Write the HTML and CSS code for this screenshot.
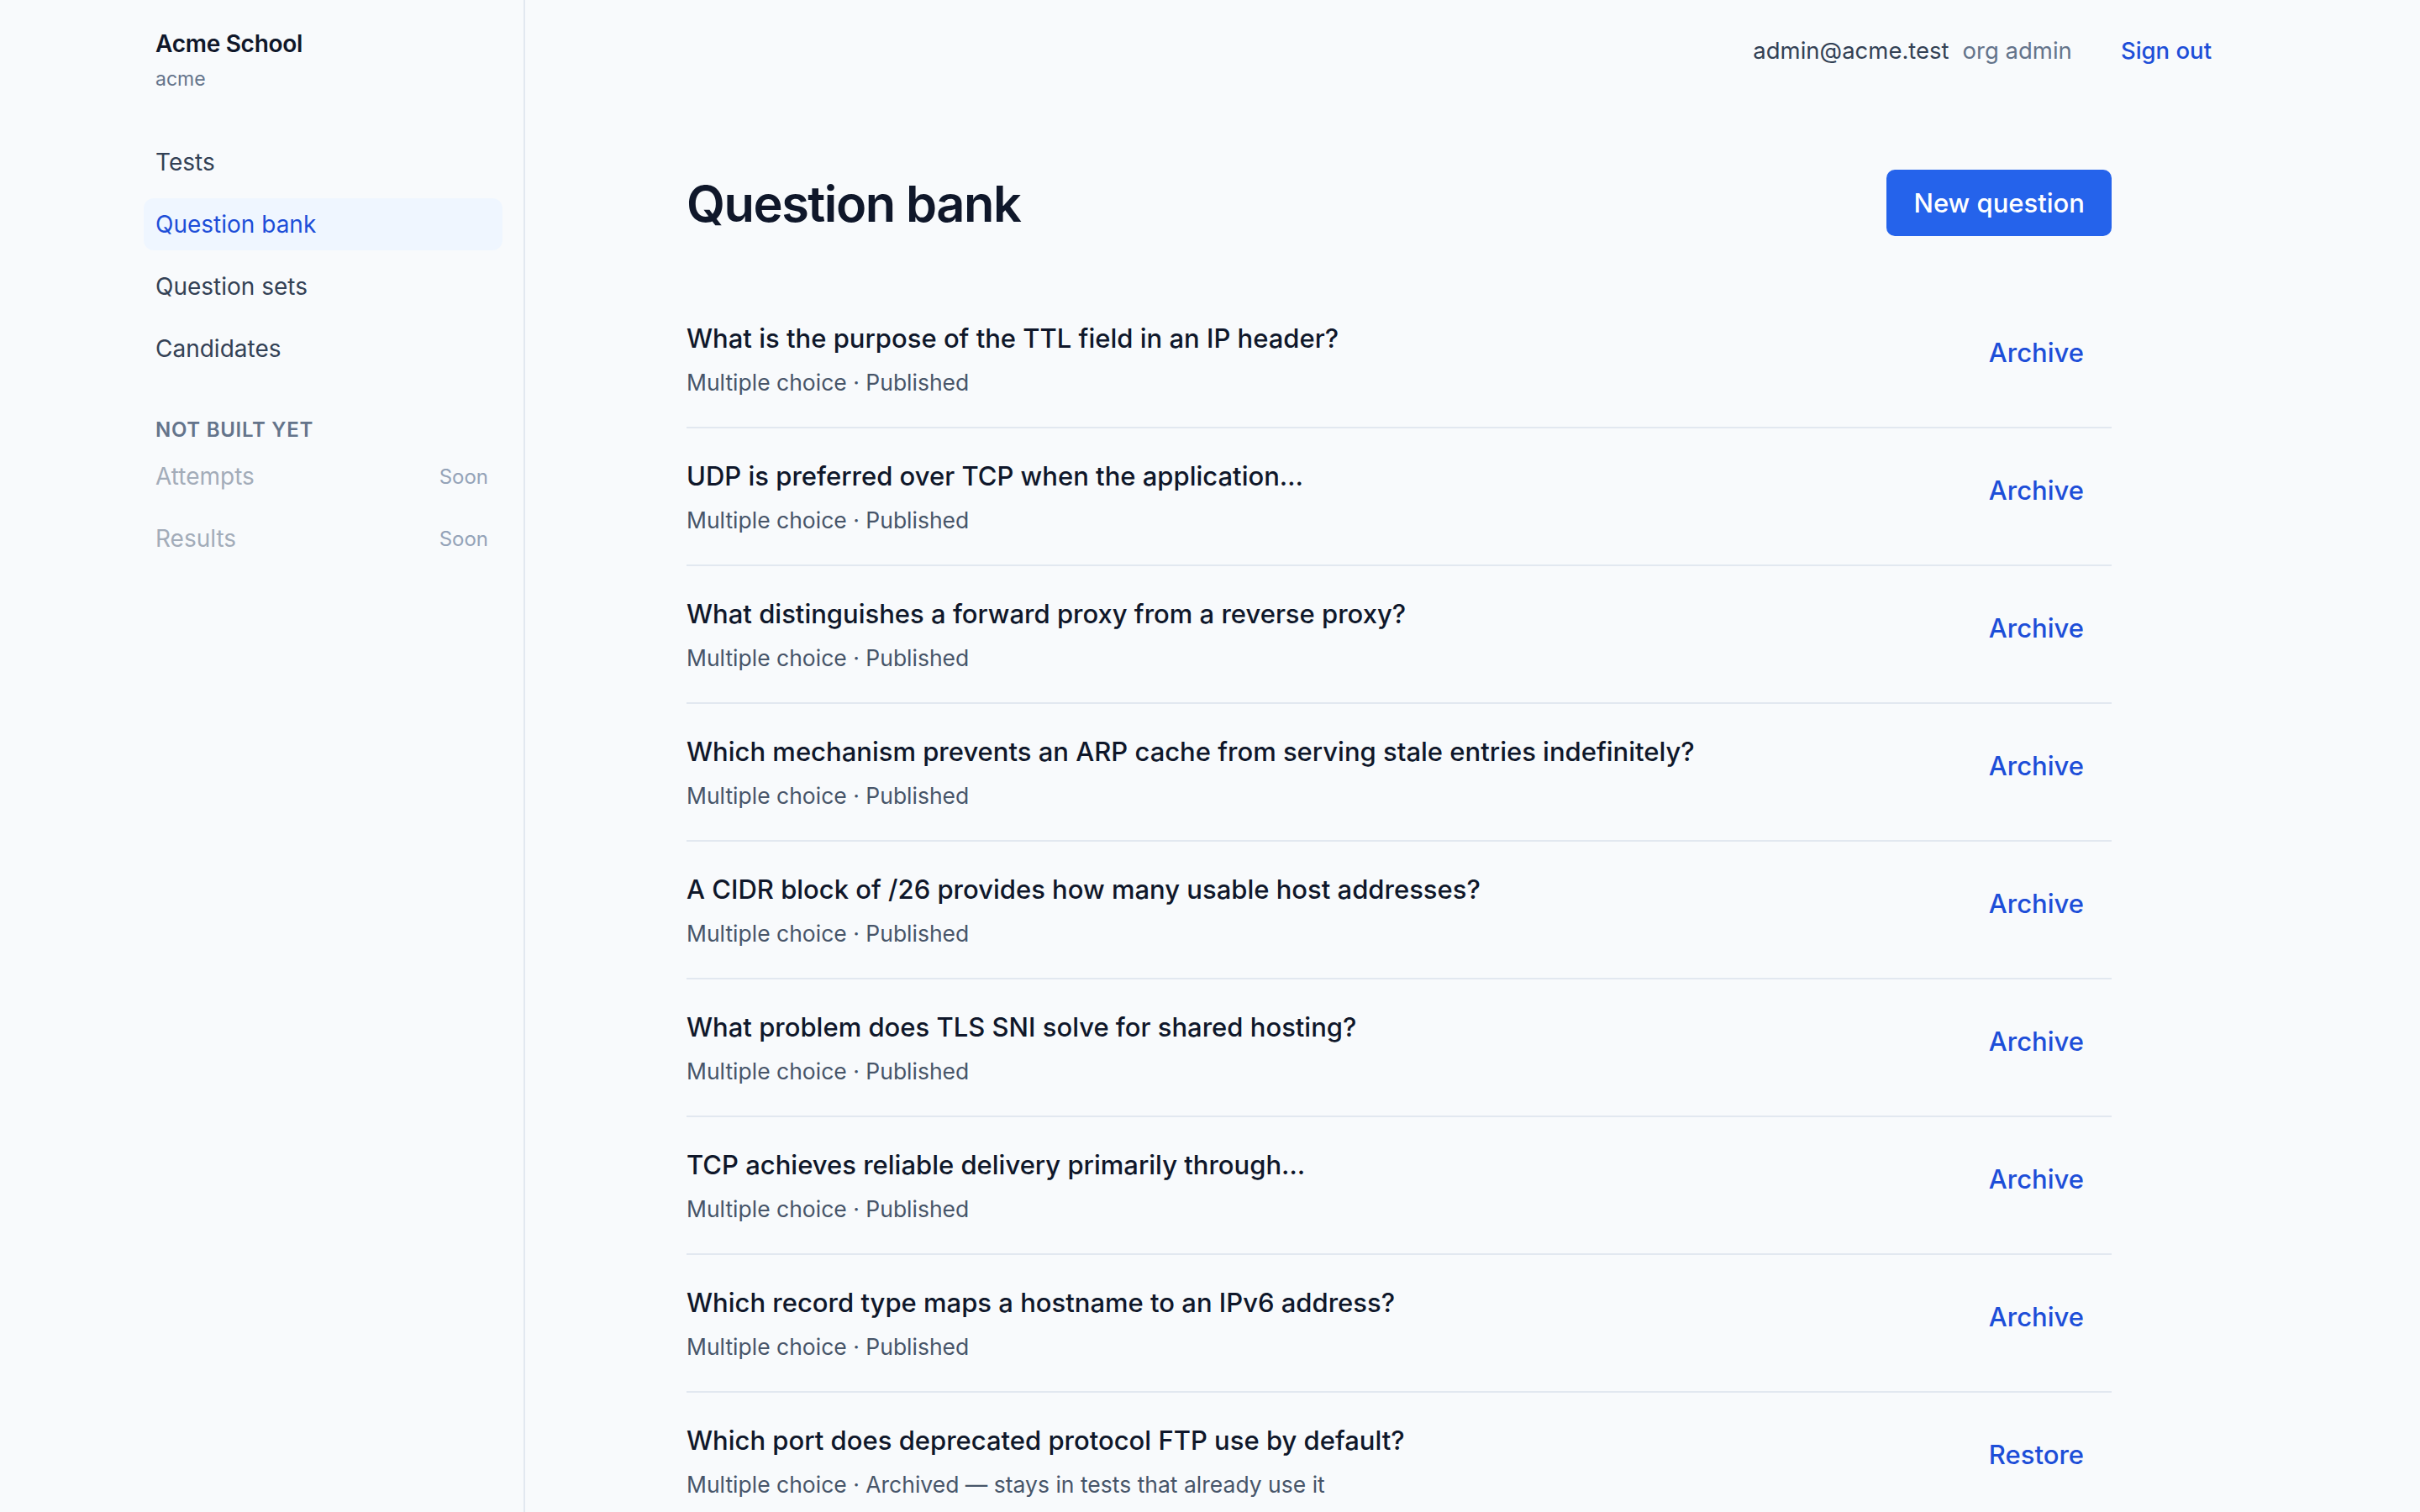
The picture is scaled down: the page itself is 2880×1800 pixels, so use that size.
FILE: index.html
```html
<!DOCTYPE html>
<html lang="en">
<head>
<meta charset="utf-8">
<title>Question bank · Acme School</title>
<link rel="stylesheet" href="styles.css">
</head>
<body>
<div class="app">
  <aside class="sidebar">
    <div class="brand">
      <div class="brand-name">Acme School</div>
      <div class="brand-slug">acme</div>
    </div>
    <nav class="nav">
      <a class="nav-item" href="#">Tests</a>
      <a class="nav-item is-active" href="#">Question bank</a>
      <a class="nav-item" href="#">Question sets</a>
      <a class="nav-item" href="#">Candidates</a>
    </nav>
    <div class="nav-section">NOT BUILT YET</div>
    <nav class="nav">
      <span class="nav-item is-disabled">Attempts<span class="soon">Soon</span></span>
      <span class="nav-item is-disabled">Results<span class="soon">Soon</span></span>
    </nav>
  </aside>

  <main class="main">
    <header class="topbar">
      <span class="user-email">admin@acme.test</span>
      <span class="user-role">org admin</span>
      <a class="signout" href="#">Sign out</a>
    </header>

    <section class="content">
      <div class="page-head">
        <h1 class="page-title">Question bank</h1>
        <button class="btn-primary" type="button">New question</button>
      </div>

      <ul class="question-list">
        <li class="question">
          <div class="question-body">
            <div class="question-text">What is the purpose of the TTL field in an IP header?</div>
            <div class="question-meta">Multiple choice · Published</div>
          </div>
          <button class="link-btn" type="button">Archive</button>
        </li>
        <li class="question">
          <div class="question-body">
            <div class="question-text">UDP is preferred over TCP when the application…</div>
            <div class="question-meta">Multiple choice · Published</div>
          </div>
          <button class="link-btn" type="button">Archive</button>
        </li>
        <li class="question">
          <div class="question-body">
            <div class="question-text">What distinguishes a forward proxy from a reverse proxy?</div>
            <div class="question-meta">Multiple choice · Published</div>
          </div>
          <button class="link-btn" type="button">Archive</button>
        </li>
        <li class="question">
          <div class="question-body">
            <div class="question-text">Which mechanism prevents an ARP cache from serving stale entries indefinitely?</div>
            <div class="question-meta">Multiple choice · Published</div>
          </div>
          <button class="link-btn" type="button">Archive</button>
        </li>
        <li class="question">
          <div class="question-body">
            <div class="question-text">A CIDR block of /26 provides how many usable host addresses?</div>
            <div class="question-meta">Multiple choice · Published</div>
          </div>
          <button class="link-btn" type="button">Archive</button>
        </li>
        <li class="question">
          <div class="question-body">
            <div class="question-text">What problem does TLS SNI solve for shared hosting?</div>
            <div class="question-meta">Multiple choice · Published</div>
          </div>
          <button class="link-btn" type="button">Archive</button>
        </li>
        <li class="question">
          <div class="question-body">
            <div class="question-text">TCP achieves reliable delivery primarily through…</div>
            <div class="question-meta">Multiple choice · Published</div>
          </div>
          <button class="link-btn" type="button">Archive</button>
        </li>
        <li class="question">
          <div class="question-body">
            <div class="question-text">Which record type maps a hostname to an IPv6 address?</div>
            <div class="question-meta">Multiple choice · Published</div>
          </div>
          <button class="link-btn" type="button">Archive</button>
        </li>
        <li class="question">
          <div class="question-body">
            <div class="question-text">Which port does deprecated protocol FTP use by default?</div>
            <div class="question-meta">Multiple choice · Archived — stays in tests that already use it</div>
          </div>
          <button class="link-btn" type="button">Restore</button>
        </li>
      </ul>
    </section>
  </main>
</div>
</body>
</html>
```

FILE: styles.css
```css
* {
  box-sizing: border-box;
}

html,
body {
  margin: 0;
  padding: 0;
  height: 100%;
}

body {
  background: #f8fafc;
  color: #0f172a;
  font-family: Inter, "Noto Sans", "Liberation Sans", sans-serif;
  overflow: hidden;
}

a {
  text-decoration: none;
}

button {
  font-family: inherit;
  border: 0;
  cursor: pointer;
}

.app {
  display: flex;
  min-height: 100vh;
}

/* ---- sidebar ---- */
.sidebar {
  width: 625px;
  flex: none;
  border-right: 2px solid #e2e8f0;
  padding: 34px 25px 0 171px;
  display: flex;
  flex-direction: column;
}

.brand {
  padding-left: 14px;
}

.brand-name {
  font-size: 28px;
  line-height: 36px;
  font-weight: 600;
  color: #0f172a;
  letter-spacing: -0.01em;
}

.brand-slug {
  margin-top: 9px;
  font-size: 23px;
  line-height: 30px;
  color: #64748b;
}

.nav {
  display: flex;
  flex-direction: column;
  gap: 12px;
}

.brand + .nav {
  margin-top: 53px;
}

.nav-item {
  display: flex;
  align-items: center;
  justify-content: space-between;
  height: 62px;
  padding: 0 17px 0 14px;
  border-radius: 12px;
  font-size: 28px;
  color: #334155;
}

.nav-item.is-active {
  background: #eff6ff;
  color: #1d4ed8;
}

.nav-item.is-disabled {
  color: #a3acb9;
}

.soon {
  font-size: 24px;
  color: #94a3b8;
}

.nav-section {
  margin-top: 51px;
  margin-bottom: 9px;
  padding-left: 14px;
  font-size: 24px;
  line-height: 30px;
  font-weight: 600;
  letter-spacing: 0.03em;
  color: #64748b;
}

/* ---- main ---- */
.main {
  flex: 1;
  min-width: 0;
  padding: 40px 248px 0 192px;
}

.topbar {
  display: flex;
  justify-content: flex-end;
  align-items: center;
  height: 40px;
  font-size: 27.5px;
}

.user-email {
  color: #334155;
}

.user-role {
  margin-left: 16px;
  color: #64748b;
}

.signout {
  margin-left: 58px;
  color: #1d4ed8;
  font-weight: 500;
}

.content {
  max-width: 1696px;
}

.page-head {
  margin-top: 122px;
  display: flex;
  align-items: center;
  justify-content: space-between;
  height: 79px;
}

.page-title {
  margin: 0;
  font-size: 59.5px;
  line-height: 64px;
  font-weight: 600;
  letter-spacing: -0.025em;
  color: #0f172a;
}

.btn-primary {
  height: 79px;
  padding: 0 32px;
  border-radius: 10px;
  background: #2563eb;
  color: #ffffff;
  font-size: 31px;
  font-weight: 500;
}

.question-list {
  list-style: none;
  margin: 65px 0 0;
  padding: 0;
}

.question {
  display: flex;
  align-items: flex-start;
  justify-content: space-between;
  padding: 35px 0 35px;
  border-bottom: 2px solid #e2e8f0;
}

.question:last-child {
  border-bottom: 0;
}

.question-text {
  font-size: 31px;
  line-height: 44px;
  font-weight: 500;
  color: #0f172a;
}

.question-meta {
  margin-top: 12px;
  font-size: 26.5px;
  line-height: 36px;
  color: #475569;
}

.link-btn {
  margin-top: 19px;
  background: transparent;
  padding: 0 33px;
  line-height: 40px;
  font-size: 31px;
  font-weight: 500;
  color: #1d4ed8;
}
```
